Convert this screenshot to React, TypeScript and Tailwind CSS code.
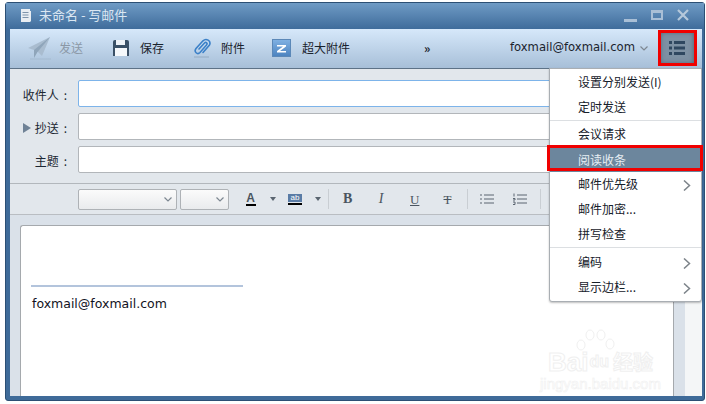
import React from "react";

const cjk = "font-['Noto_Sans_CJK_SC','Liberation_Sans',sans-serif]";

function Send() {
  return (
    <svg width="24" height="24" viewBox="0 0 24 24" className="ml-[17px] shrink-0">
      <path d="M1 12 L23 1 L15 20 L10 15 Z" fill="#a9bccf" />
      <path d="M23 1 L7 14 L7 22 L10.5 16 Z" fill="#8fa5ba" />
      <path d="M3 23 H24" stroke="#9fb3c8" strokeWidth="1" opacity="0.6" />
    </svg>
  );
}
function Save() {
  return (
    <svg width="18" height="18" viewBox="0 0 18 18" className="ml-[29px] shrink-0">
      <path d="M1 3 Q1 1 3 1 H15 Q17 1 17 3 V17 H1 Z" fill="#3a5066" />
      <rect x="4" y="1" width="9" height="5" fill="#eef3f8" />
      <rect x="3" y="9" width="12" height="8" fill="#f5f8fb" />
    </svg>
  );
}
function Clip() {
  return (
    <svg width="20" height="20" viewBox="0 0 20 20" fill="none" className="ml-[28px] shrink-0">
      <path
        d="M7 11 L12.5 5 C14 3.5 16 5.5 14.5 7 L8 14.5 C5.5 17 1.5 14 4 10.5 L11 2.8 C14 0 19.5 2.5 17.5 7 L11 14.5"
        stroke="#3b80c8"
        strokeWidth="1.6"
        strokeLinecap="round"
      />
      <path d="M2 19 H17" stroke="#7f97ae" strokeWidth="1" opacity="0.6" />
    </svg>
  );
}
function BigZ() {
  return (
    <div className="ml-[27px] flex h-[18px] w-[19px] shrink-0 items-center justify-center border border-[#5b88b8] bg-gradient-to-b from-[#7fb0e2] to-[#4d84c0]">
      <svg width="11" height="9" viewBox="0 0 11 9">
        <path d="M1 1 H10 V2.5 L4 7 H10 V8.5 H1 V7 L7 2.5 H1 Z" fill="#fff" />
      </svg>
    </div>
  );
}
function Chevron({ className = "" }: { className?: string }) {
  return (
    <svg width="8" height="5" viewBox="0 0 8 5" fill="none" className={`shrink-0 ${className}`}>
      <path d="M0.5 0.5 L4 4 L7.5 0.5" stroke="#7d8791" strokeWidth="1.2" />
    </svg>
  );
}
function Right() {
  return (
    <svg width="8" height="11" viewBox="0 0 8 11" fill="none" className="absolute right-[10px] top-[8px]">
      <path d="M1 0.5 L6.5 5.5 L1 10.5" stroke="#7c8389" strokeWidth="1.5" />
    </svg>
  );
}
function Caret({ className = "" }: { className?: string }) {
  return (
    <svg width="6" height="4" viewBox="0 0 6 4" className={`shrink-0 ${className}`}>
      <path d="M0 0 H6 L3 4 Z" fill="#5a6570" />
    </svg>
  );
}
function Field({ label, focus, arrow }: { label: string; focus?: boolean; arrow?: boolean }) {
  return (
    <div className="flex h-[27px] items-center">
      <div className={`relative flex w-[57px] shrink-0 items-center justify-end whitespace-nowrap pt-[2px] text-[12px] text-[#1c2733] ${cjk}`}>
        {arrow && (
          <svg width="8" height="10" viewBox="0 0 8 10" className="mr-[4px]">
            <path d="M0 0 L8 5 L0 10 Z" fill="#6f8296" />
          </svg>
        )}
        {label}
        <span className="ml-[5px]">:</span>
      </div>
      <div
        className={`ml-[11px] h-[27px] flex-1 rounded-[2px] border bg-white ${
          focus ? "border-[#7db4ea]" : "border-[#b2b6ba]"
        }`}
      />
    </div>
  );
}
function Select({ w }: { w: string }) {
  return (
    <div className={`${w} flex h-[21px] shrink-0 items-center justify-end rounded-[2px] border border-[#aeb2b6] bg-gradient-to-b from-[#fbfbfb] to-[#e9ebed] pr-[4px]`}>
      <Chevron />
    </div>
  );
}
function Sep() {
  return <div className="h-[20px] w-px bg-[#c9ced3]" />;
}
function MenuItem({ t, arrow, active }: { t: string; arrow?: boolean; active?: boolean }) {
  return (
    <div
      className={`relative flex h-[25px] items-center pl-[28px] text-[12px] ${cjk} ${
        active ? "bg-[#6c869d] text-[#e6edf3]" : "pb-[2px] text-[#16202a]"
      }`}
    >
      {t}
      {arrow && <Right />}
    </div>
  );
}
function MenuSep() {
  return <div className="h-px bg-[#dcdfe2]" />;
}

export default function App() {
  return (
    <div className="relative h-[404px] w-[706px] overflow-hidden bg-white pl-[5px] pt-[2px]">
      <div className="flex h-[399px] w-[700px] flex-col rounded-[3px] border border-[#2c4f74] bg-[#3f6b99] pb-[4px] pl-[4px] pr-[2px]">
        {/* title bar */}
        <div className={`-ml-[4px] -mr-[2px] flex h-[26px] shrink-0 items-center bg-gradient-to-b from-[#6f9bc5] to-[#3f6c9b] pb-[2px] pl-[14px] text-[13px] text-[#dbe7f2] ${cjk}`}>
          <svg width="11" height="13" viewBox="0 0 11 13">
            <path d="M1 0 H10 V2 H11 V12 L10 13 H1 Z" fill="#e8edf2" />
            <path d="M2.5 3.5 H8.5 M2.5 6 H8.5 M2.5 8.5 H8.5" stroke="#7d93aa" strokeWidth="1" />
          </svg>
          <span className="ml-[8px] whitespace-nowrap">未命名 - 写邮件</span>
          <div className="ml-auto flex items-center gap-[14px] pr-[15px]">
            <div className="mt-[10px] h-[3px] w-[13px] bg-[#a9bfd6]" />
            <div className="h-[10px] w-[12px] border-2 border-t-[3px] border-[#a9bfd6]" />
            <svg width="12" height="12" viewBox="0 0 12 12">
              <path d="M1 1 L11 11 M11 1 L1 11" stroke="#b5c8db" strokeWidth="2.2" />
            </svg>
          </div>
        </div>

        {/* toolbar */}
        <div className={`relative flex h-[40px] shrink-0 items-center whitespace-nowrap border-b border-[#5d7287] bg-gradient-to-b from-[#d6e8fa] to-[#a7bfd8] pb-[1px] pr-[8px] text-[12px] text-[#1a232d] ${cjk}`}>
          <Send />
          <span className="ml-[8px] text-[#8b98a6]">发送</span>
          <Save />
          <span className="ml-[10px]">保存</span>
          <Clip />
          <span className="ml-[9px]">附件</span>
          <BigZ />
          <span className="ml-[11px]">超大附件</span>
          <span className="ml-[74px] font-bold">»</span>
          <span className="ml-auto font-['DejaVu_Sans',sans-serif] text-[11.6px]">foxmail@foxmail.com</span>
          <Chevron className="ml-[5px]" />
          <div className="ml-[12px] flex h-[32px] w-[34px] shrink-0 items-center justify-center bg-[#7d90a3] shadow-[inset_0_0_5px_rgba(50,70,90,0.7)]">
            <svg width="16" height="14" viewBox="0 0 16 14">
              <g fill="#2f4760">
                <rect x="0" y="0" width="3" height="3" />
                <rect x="5" y="0" width="11" height="3" />
                <rect x="0" y="5.5" width="3" height="3" />
                <rect x="5" y="5.5" width="11" height="3" />
                <rect x="0" y="11" width="3" height="3" />
                <rect x="5" y="11" width="11" height="3" />
              </g>
            </svg>
          </div>
        </div>

        {/* recipients */}
        <div className="flex shrink-0 flex-col gap-[6px] border-b border-[#b2b7bc] bg-[#e2e7ec] pb-[10px] pr-[26px] pt-[11px]">
          <Field label="收件人" focus />
          <Field label="抄送" arrow />
          <Field label="主题" />
        </div>

        {/* format bar */}
        <div className="flex h-[31px] shrink-0 items-center border-b border-[#b9bdc2] bg-[#e2e7ec] pl-[68px] font-['Liberation_Serif',serif] text-[#4a5560]">
          <Select w="w-[99px]" />
          <div className="w-[3px] shrink-0" />
          <Select w="w-[49px]" />
          <div className="ml-[16px] flex w-[11px] shrink-0 flex-col items-center">
            <span className="font-['Liberation_Sans',sans-serif] text-[12px] font-bold leading-[12px]">A</span>
            <div className="h-[2px] w-[10px] bg-black" />
          </div>
          <Caret className="ml-[14px]" />
          <div className="ml-[12px] flex w-[14px] shrink-0 flex-col items-center">
            <div className="flex h-[8px] w-[14px] items-center justify-center bg-[#5a7ca6] font-['Liberation_Sans',sans-serif] text-[8px] leading-none text-white">ab</div>
            <div className="mt-[1px] h-[2px] w-[14px] bg-black" />
          </div>
          <Caret className="ml-[13px]" />
          <div className="ml-[7px]"><Sep /></div>
          <span className="ml-[14px] w-[9px] shrink-0 text-center text-[14px] font-bold leading-none">B</span>
          <span className="ml-[26px] w-[6px] shrink-0 text-center text-[14px] italic leading-none">I</span>
          <span className="ml-[26px] w-[9px] shrink-0 text-center text-[13px] leading-none underline">U</span>
          <span className="ml-[21px] w-[15px] shrink-0 text-center text-[13px] leading-none line-through">T</span>
          <div className="ml-[12px]"><Sep /></div>
          <svg width="14" height="10" viewBox="0 0 14 10" className="ml-[12px] shrink-0">
            <path d="M4 1 H14 M4 5 H14 M4 9 H14 M0 1 H2 M0 5 H2 M0 9 H2" stroke="#5b6570" strokeWidth="1" />
          </svg>
          <svg width="14" height="12" viewBox="0 0 14 12" className="ml-[19px] shrink-0">
            <path d="M4 2 H14 M4 6 H14 M4 10 H14 M1 0.5 V3.5 M0 5.5 H2 V7 H0 M0 9 H2 V11.5 H0" stroke="#5b6570" strokeWidth="1" fill="none" />
          </svg>
          <div className="ml-[13px]"><Sep /></div>
        </div>

        {/* editor */}
        <div className="flex min-h-0 flex-1 bg-[#dae1e9] pl-[10px] pt-[10px]">
          <div className="relative flex-1 rounded-tl-[3px] border-l border-t border-[#a5a9ad] bg-white">
            <div className="ml-[10px] mt-[59px] h-[2px] w-[212px] bg-[#b3c4dc]" />
            <div className="ml-[11px] mt-[9px] font-['DejaVu_Sans',sans-serif] text-[12.5px] leading-[16px] text-[#111122]">foxmail@foxmail.com</div>
            {/* watermark */}
            <div className="absolute left-[519px] top-[103px] flex flex-col items-center text-transparent [-webkit-text-stroke:1px_#f0f0f0]">
              <svg width="42" height="24" viewBox="0 0 42 24" fill="none" stroke="#f0f0f0" strokeWidth="1" className="-ml-[10px]">
                <ellipse cx="7" cy="16" rx="4" ry="5" />
                <ellipse cx="16" cy="6" rx="4" ry="5" />
                <ellipse cx="27" cy="6" rx="4" ry="5" />
                <ellipse cx="36" cy="15" rx="4" ry="5" />
              </svg>
              <div className="-mt-[3px] flex items-end whitespace-nowrap font-['Liberation_Sans',sans-serif] text-[26px] font-bold leading-[24px]">
                <span>Bai</span>
                <span className="ml-[1px] text-[16px]">du</span>
                <span className={`ml-[4px] text-[20px] ${cjk}`}>经验</span>
              </div>
              <div className="mt-[3px] whitespace-nowrap font-['Liberation_Sans',sans-serif] text-[15px] leading-[14px] [-webkit-text-stroke:0.6px_#f0f0f0]">jingyan.baidu.com</div>
            </div>
          </div>
          <div className="w-[1px] shrink-0 bg-[#a5a9ad]" />
          <div className="w-[11px] shrink-0 bg-[#dae1e9]" />
          <div className="w-[17px] shrink-0 bg-[#f4f6f7]" />
        </div>
      </div>

      {/* dropdown menu */}
      <div className="absolute left-[549px] top-[68px] w-[153px] rounded-b-[3px] border border-[#a9aeb3] bg-white py-[1px] shadow-[0_1px_2px_rgba(0,0,0,0.25)]">
        <MenuItem t="设置分别发送(I)" />
        <MenuItem t="定时发送" />
        <MenuSep />
        <div className="h-[1px]" />
        <MenuItem t="会议请求" />
        <MenuItem t="阅读收条" active />
        <MenuItem t="邮件优先级" arrow />
        <MenuItem t="邮件加密..." />
        <MenuItem t="拼写检查" />
        <MenuSep />
        <div className="h-[2px]" />
        <MenuItem t="编码" arrow />
        <MenuItem t="显示边栏..." arrow />
      </div>

      {/* annotation boxes */}
      <div className="absolute left-[658px] top-[30px] h-[36px] w-[39px] border-[3px] border-[#f00000]" />
      <div className="absolute left-[547px] top-[145px] h-[26px] w-[156px] border-[3px] border-[#f00000]" />
    </div>
  );
}
